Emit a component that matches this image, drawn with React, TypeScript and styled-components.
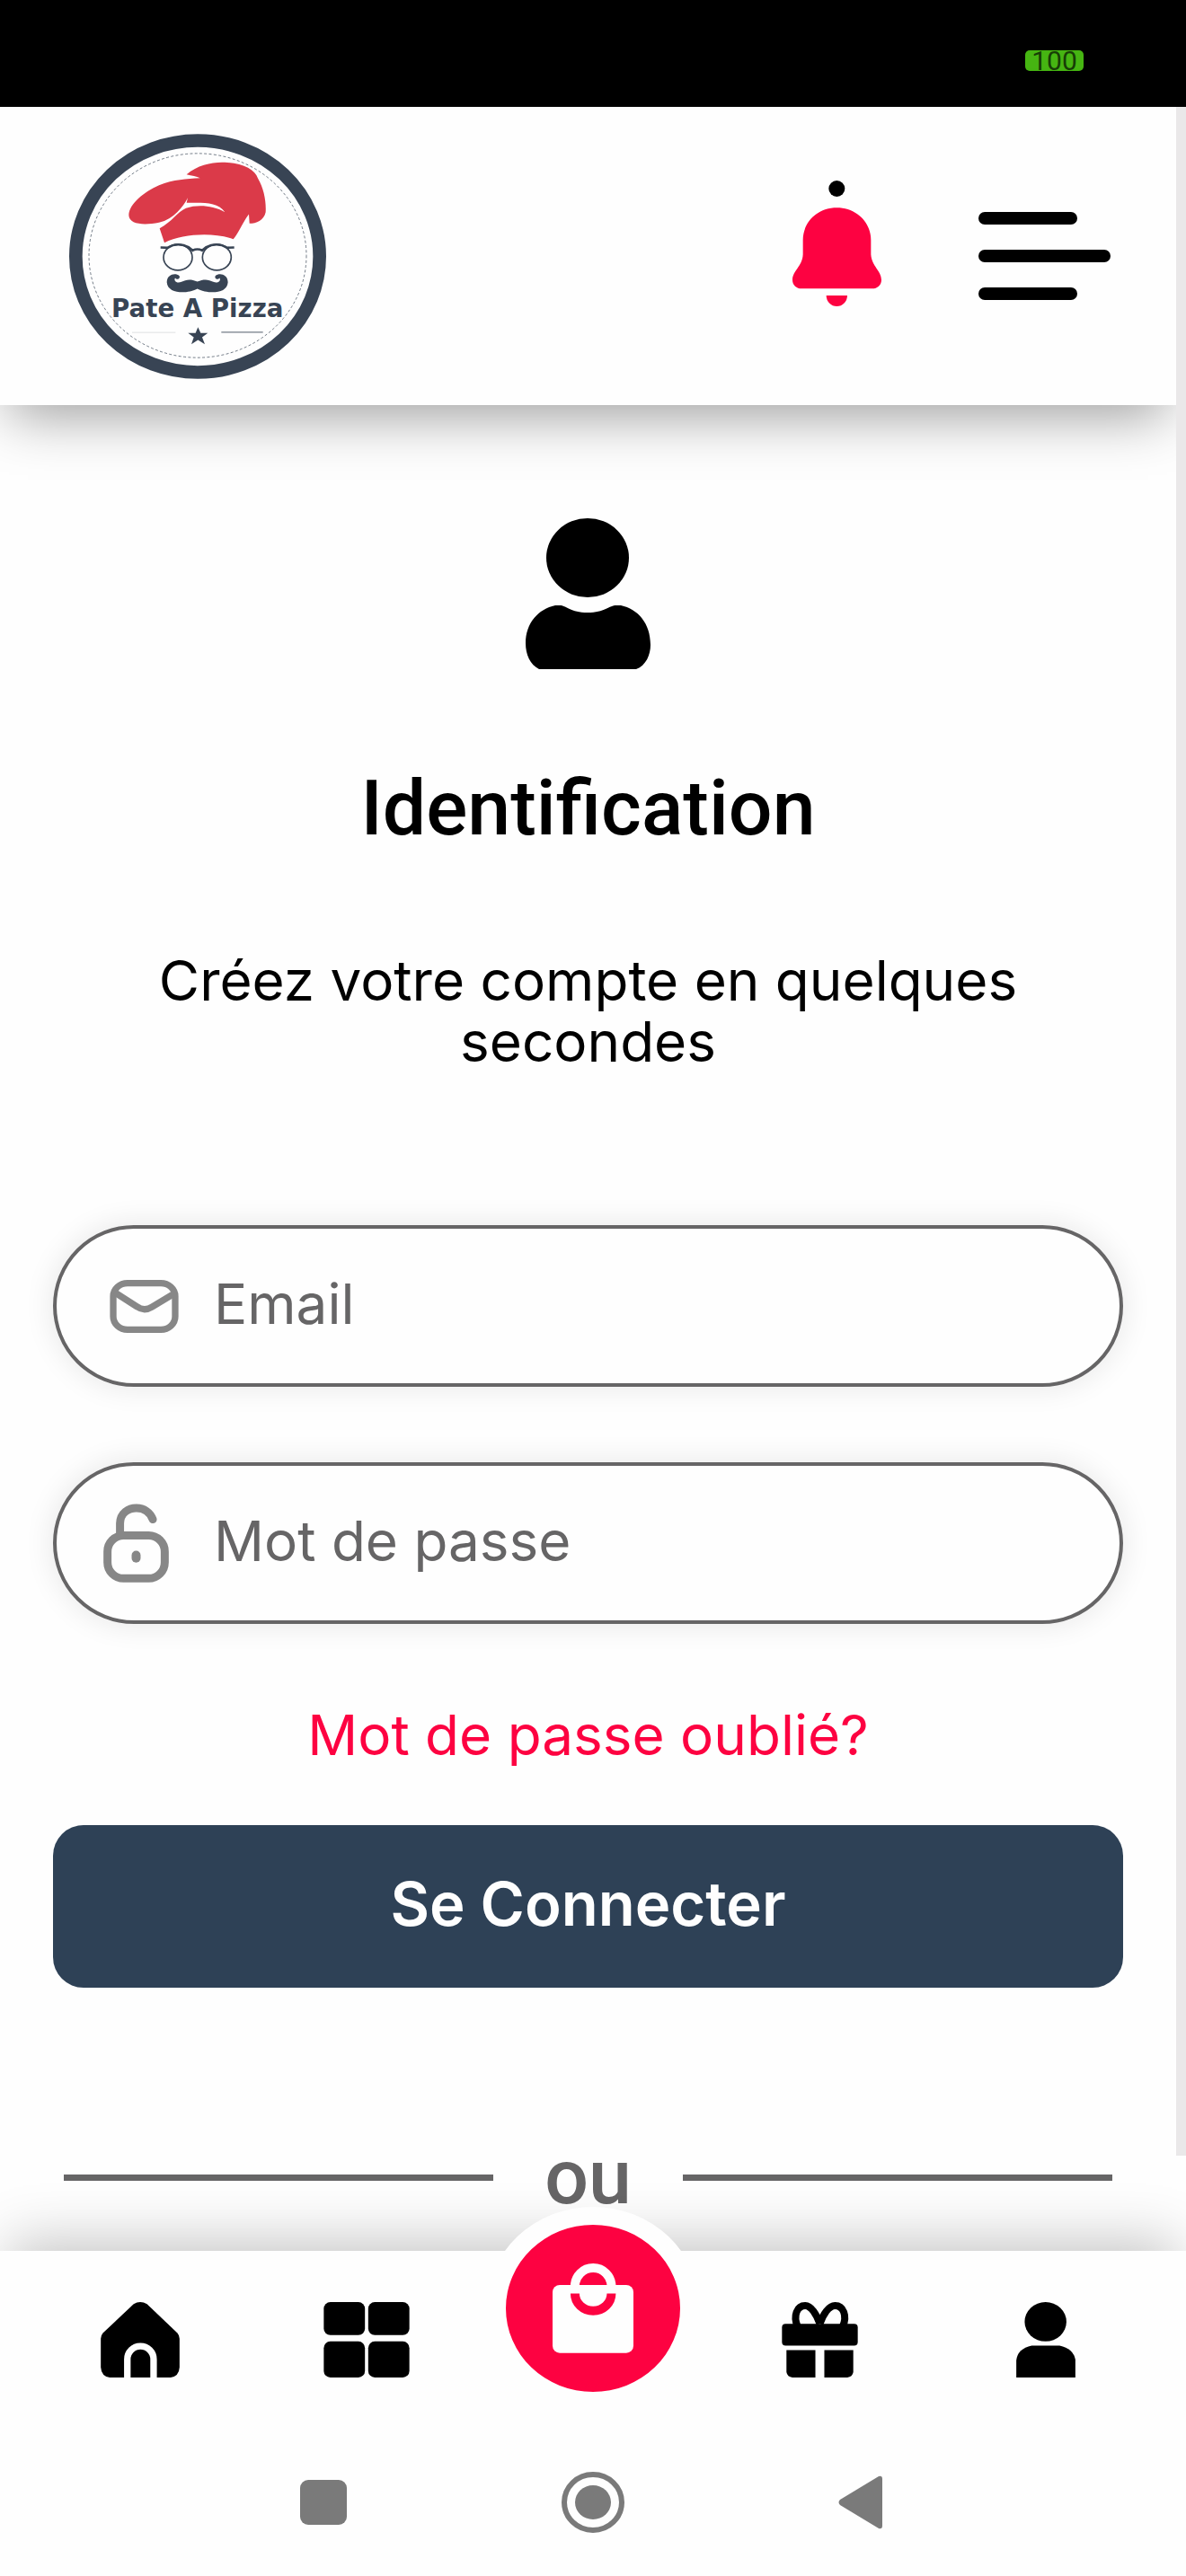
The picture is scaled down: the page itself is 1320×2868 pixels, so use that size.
import React from 'react'
import styled, { createGlobalStyle } from 'styled-components'

const colors = {
  black: '#000000',
  white: '#fefefe',
  red: '#fd0241',
  hat: '#db3a49',
  navy: '#2e4156',
  ink: '#384454',
  grey: '#666566',
  iconGrey: '#878787',
  system: '#7a7a7a',
  rail: '#eae8e9',
  battery: '#46b512',
}

const Logo = () => (
  <svg width="286" height="273" viewBox="50 57 858 818" role="img" aria-label="Pate A Pizza">
    <ellipse cx="479" cy="466" rx="407" ry="387" fill="none" stroke={colors.ink} strokeWidth="44" />
    <ellipse
      cx="479"
      cy="463"
      rx="363"
      ry="341"
      fill="none"
      stroke={colors.ink}
      strokeWidth="3"
      strokeDasharray="9 7"
      opacity="0.7"
    />
    <path
      fill={colors.hat}
      d="M442 192C480 160 530 150 570 152C630 154 670 175 680 205C700 240 708 280 706 318C700 345 675 356 652 356L650 325C630 350 615 390 598 408C530 385 430 390 368 420L352 372C395 350 410 318 440 305C480 292 530 296 570 318C545 283 500 287 442 287L446 270C430 300 400 340 350 353C300 362 250 360 249 328C250 290 300 250 350 228C400 208 440 207 487 204C475 198 460 196 442 192Z"
    />
    <g fill="none" stroke={colors.ink} strokeWidth="5">
      <ellipse cx="413" cy="469" rx="48" ry="43" />
      <ellipse cx="543" cy="469" rx="48" ry="43" />
      <path strokeWidth="8" d="M355 436L378 437Q413 416 450 436L462 446Q478 438 494 446L506 436Q543 416 578 437L601 436" />
    </g>
    <path
      fill={colors.ink}
      d="M478 550C455 540 440 543 425 551C408 558 398 546 404 538C410 546 422 540 418 531C405 520 377 525 376 552C378 580 410 588 440 585C460 583 470 578 478 574C486 578 496 583 516 585C548 588 578 580 580 552C579 525 551 520 538 531C534 540 546 546 552 538C558 546 548 558 531 551C516 543 501 540 478 550Z"
    />
    <text x="191" y="669" fontFamily="'DejaVu Sans', sans-serif" fontWeight="700" fontSize="83" fill={colors.ink}>
      Pate A Pizza
    </text>
    <path fill={colors.ink} d="M480 702L489 722L513 722L494 736L503 759L480 745L458 759L466 736L447 722L472 722Z" />
    <path stroke={colors.ink} strokeWidth="4" opacity="0.7" d="M558 719H697" />
    <path stroke={colors.ink} strokeWidth="3" opacity="0.15" d="M260 720H405" />
  </svg>
)

const BellIcon = () => (
  <svg width="99" height="140" viewBox="125 63 297 420">
    <circle cx="273" cy="90" r="27" />
    <path
      fill={colors.red}
      d="M273 154C338 154 387 202 387 262V310C390 350 422 365 422 395C422 412 408 424 392 424H155C139 424 125 412 125 395C125 365 158 350 160 310V262C160 202 208 154 273 154ZM238 447H308A35 36 0 0 1 238 447Z"
    />
  </svg>
)

const AccountIcon = () => (
  <svg width="139" height="168" viewBox="0 0 139 168">
    <ellipse cx="69" cy="44" rx="46" ry="44" />
    <path d="M15 168C5 163 0 152 0 139C0 117 14 101 33 97H38C45 97 50 105 69 105C88 105 93 97 101 97H106C125 101 139 117 139 141C139 152 134 164 123 168Z" />
  </svg>
)

const MailIcon = () => (
  <svg width="77" height="59" viewBox="244 256 230 178" fill="none" stroke={colors.iconGrey} strokeWidth="22">
    <rect x="255" y="267" width="208" height="156" rx="48" ry="44" />
    <path d="M260 298L335 346Q359 363 385 347L460 302" />
  </svg>
)

const LockIcon = () => (
  <svg
    width="73"
    height="88"
    viewBox="221 1005 220 263"
    fill="none"
    stroke={colors.iconGrey}
    strokeWidth="27"
    strokeLinecap="round"
  >
    <rect x="235" y="1111" width="192" height="144" rx="54" />
    <path d="M277 1108V1070C278 1035 305 1019 332 1019C357 1019 378 1033 387 1057" />
    <path strokeWidth="30" d="M331 1177V1187" />
  </svg>
)

const HomeIcon = () => (
  <svg width="88" height="84" viewBox="156 549 264 253">
    <path d="M266 556Q288 542 311 556L412 652Q420 660 420 672V768Q418 798 390 802H186Q158 798 156 768V672Q156 660 164 652Z" />
    <path fill="none" stroke={colors.white} strokeWidth="22" d="M245 804V741A44 44 0 0 1 333 741V804" />
  </svg>
)

const GridIcon = () => (
  <svg width="96" height="84" viewBox="898 549 287 253">
    <rect x="898" y="549" width="138" height="111" rx="22" />
    <rect x="1047" y="549" width="138" height="111" rx="22" />
    <rect x="898" y="681" width="138" height="121" rx="22" />
    <rect x="1047" y="681" width="138" height="121" rx="22" />
  </svg>
)

const BagIcon = () => (
  <svg width="90" height="100" viewBox="342 485 271 299" fill="none" strokeWidth="30">
    <rect x="342" y="556" width="271" height="228" rx="24" fill={colors.white} />
    <path stroke={colors.white} d="M417 560A61 61 0 0 1 539 560" />
    <path stroke={colors.red} d="M417 585A61 58 0 0 0 539 585" />
  </svg>
)

const GiftIcon = () => (
  <svg width="85" height="84" viewBox="118 609 254 253">
    <rect x="118" y="682" width="254" height="73" rx="12" />
    <path d="M133 770H230V862H153Q136 860 133 844ZM260 770H357V844Q354 860 337 862H260Z" />
    <path
      fill="none"
      stroke={colors.black}
      strokeWidth="24"
      d="M245 682C234 650 215 621 196 621C168 621 155 655 170 690M245 682C256 650 275 621 296 621C324 621 337 655 322 690"
    />
  </svg>
)

const ProfileIcon = () => (
  <svg width="66" height="84" viewBox="903 609 198 253">
    <ellipse cx="1001" cy="675" rx="70" ry="66" />
    <path d="M903 862V805Q907 765 955 755H1048Q1094 765 1101 802V862Z" />
  </svg>
)

const App: React.FC = () => {
  return (
    <Screen>
      <GlobalStyle />
      <StatusBar>
        <Battery>100</Battery>
      </StatusBar>
      <Scroller>
        <Content>
          <Header>
            <a href="#accueil">
              <Logo />
            </a>
            <HeaderActions>
              <IconButton type="button" aria-label="Notifications">
                <BellIcon />
              </IconButton>
              <MenuButton type="button" aria-label="Menu">
                <MenuLine />
                <MenuLine $long />
                <MenuLine />
              </MenuButton>
            </HeaderActions>
          </Header>
          <Form onSubmit={(e) => e.preventDefault()}>
            <AccountIcon />
            <Title>Identification</Title>
            <Intro>Créez votre compte en quelques secondes</Intro>
            <Fields>
              <Field>
                <FieldIcon>
                  <MailIcon />
                </FieldIcon>
                <Input type="email" placeholder="Email" aria-label="Email" />
              </Field>
              <Field>
                <FieldIcon $wide>
                  <LockIcon />
                </FieldIcon>
                <Input type="password" placeholder="Mot de passe" aria-label="Mot de passe" />
              </Field>
            </Fields>
            <ForgotLink href="#oublie">Mot de passe oublié?</ForgotLink>
            <SubmitButton type="submit">Se Connecter</SubmitButton>
            <Divider>ou</Divider>
          </Form>
        </Content>
        <Rail />
      </Scroller>
      <BottomArea>
        <TabBar>
          <Tab href="#accueil" aria-label="Accueil">
            <HomeIcon />
          </Tab>
          <Tab href="#menu" aria-label="Menu">
            <GridIcon />
          </Tab>
          <Tab href="#panier" aria-label="Panier">
            <CartBubble>
              <BagIcon />
            </CartBubble>
          </Tab>
          <Tab href="#cadeaux" aria-label="Cadeaux">
            <GiftIcon />
          </Tab>
          <Tab href="#compte" aria-label="Compte">
            <ProfileIcon />
          </Tab>
        </TabBar>
        <SystemBar>
          <SystemButton type="button" aria-label="Applications">
            <svg width="52" height="50">
              <rect width="52" height="50" rx="9" fill={colors.system} />
            </svg>
          </SystemButton>
          <SystemButton type="button" aria-label="Écran principal">
            <svg width="71" height="69" viewBox="0 0 71 69">
              <ellipse cx="35" cy="34" rx="32" ry="31" fill="none" stroke={colors.system} strokeWidth="6" />
              <ellipse cx="35" cy="34" rx="20" ry="19" fill={colors.system} />
            </svg>
          </SystemButton>
          <SystemButton type="button" aria-label="Retour">
            <svg width="54" height="60" viewBox="0 0 54 60">
              <path fill={colors.system} d="M45 1Q49 0 49 4V56Q49 60 45 59L2 33Q-1 30 2 27Z" />
            </svg>
          </SystemButton>
        </SystemBar>
      </BottomArea>
    </Screen>
  )
}
export default App

const GlobalStyle = createGlobalStyle`
  * {
    box-sizing: border-box;
  }
  body {
    margin: 0;
    background-color: ${colors.white};
    color: ${colors.black};
    font-family: Inter, 'Open Sans', sans-serif;
  }
  svg {
    display: block;
    flex-shrink: 0;
  }
  button {
    border: 0;
    padding: 0;
    background: none;
    font-family: inherit;
    cursor: pointer;
  }
`
const Screen = styled.div`
  display: flex;
  flex-direction: column;
  min-height: 100vh;
  overflow: hidden;
`
const StatusBar = styled.div`
  display: flex;
  justify-content: flex-end;
  align-items: flex-end;
  height: 119px;
  padding: 0 114px 40px;
  background-color: ${colors.black};
`
const Battery = styled.span`
  width: 65px;
  height: 23px;
  border-radius: 5px;
  background-color: ${colors.battery};
  color: #173d06;
  font-family: Roboto, sans-serif;
  font-size: 30px;
  line-height: 24px;
  text-align: center;
`
const Scroller = styled.div`
  display: flex;
  flex: 1;
`
const Content = styled.main`
  flex: 1;
  min-width: 0;
  display: flex;
  flex-direction: column;
`
const Rail = styled.div`
  flex-shrink: 0;
  width: 11px;
  margin-bottom: 106px;
  background-color: ${colors.rail};
  z-index: 1;
`
const Header = styled.header`
  display: flex;
  justify-content: space-between;
  align-items: center;
  height: 332px;
  padding: 0 73px 0 77px;
  background-color: ${colors.white};
  box-shadow: 0 20px 60px -10px rgba(0, 0, 0, 0.4);
`
const HeaderActions = styled.div`
  display: flex;
  align-items: center;
  gap: 108px;
`
const IconButton = styled.button`
  margin-bottom: 28px;
`
const MenuButton = styled.button`
  display: flex;
  flex-direction: column;
  gap: 28px;
  width: 147px;
`
const MenuLine = styled.span<{ $long?: boolean }>`
  width: ${(props) => (props.$long ? '100%' : '75%')};
  height: 14px;
  border-radius: 7px;
  background-color: ${colors.black};
`
const Form = styled.form`
  display: flex;
  flex-direction: column;
  align-items: center;
  padding: 126px 59px 0;
`
const Title = styled.h1`
  margin: 107px 0 0;
  font-family: Roboto, sans-serif;
  font-size: 86px;
  font-weight: 500;
  line-height: 96px;
`
const Intro = styled.p`
  max-width: 1100px;
  margin: 110px 0 0;
  font-size: 62px;
  line-height: 68px;
  text-align: center;
`
const Fields = styled.div`
  display: flex;
  flex-direction: column;
  align-self: stretch;
  gap: 84px;
  margin-top: 170px;
`
const Field = styled.label`
  display: flex;
  align-items: center;
  height: 180px;
  padding: 0 52px;
  border: 4px solid ${colors.grey};
  border-radius: 90px;
  box-shadow: 0 0 30px 4px rgba(0, 0, 0, 0.08);
`
const FieldIcon = styled.span<{ $wide?: boolean }>`
  display: flex;
  justify-content: center;
  width: ${(props) => (props.$wide ? '73px' : '91px')};
  margin-right: ${(props) => (props.$wide ? '50px' : '32px')};
`
const Input = styled.input`
  flex: 1;
  min-width: 0;
  border: 0;
  padding: 0 0 4px;
  outline: 0;
  background: none;
  color: ${colors.grey};
  font-family: inherit;
  font-size: 62px;
  line-height: 68px;
  &::placeholder {
    color: ${colors.grey};
    opacity: 1;
  }
`
const ForgotLink = styled.a`
  margin-top: 90px;
  color: ${colors.red};
  font-size: 62px;
  line-height: 68px;
  text-decoration: none;
`
const SubmitButton = styled.button`
  align-self: stretch;
  height: 181px;
  margin-top: 66px;
  padding-bottom: 6px;
  border-radius: 34px;
  background-color: ${colors.navy};
  color: ${colors.white};
  font-size: 67px;
  font-weight: 600;
`
const Divider = styled.div`
  display: flex;
  align-items: center;
  align-self: stretch;
  gap: 57px;
  margin: 163px 12px 0;
  color: ${colors.grey};
  font-family: Roboto, sans-serif;
  font-size: 86px;
  font-weight: 500;
  line-height: 96px;
  &::before,
  &::after {
    content: '';
    flex: 1;
    height: 7px;
    background-color: ${colors.grey};
  }
`
const BottomArea = styled.footer`
  position: relative;
  background-color: ${colors.white};
  box-shadow: 0 -20px 60px -10px rgba(0, 0, 0, 0.23);
`
const TabBar = styled.nav`
  display: flex;
  height: 198px;
  padding: 0 30px;
`
const Tab = styled.a`
  flex: 1;
  display: flex;
  justify-content: center;
  align-items: center;
  color: ${colors.black};
`
const CartBubble = styled.span`
  display: flex;
  justify-content: center;
  align-items: center;
  flex-shrink: 0;
  width: 238px;
  height: 226px;
  margin-bottom: 70px;
  border: solid ${colors.white};
  border-width: 20px 22px;
  border-radius: 50%;
  background-color: ${colors.red};
`
const SystemBar = styled.div`
  display: flex;
  height: 164px;
  padding: 0 210px;
`
const SystemButton = styled.button`
  flex: 1;
  display: flex;
  justify-content: center;
  align-items: center;
`
